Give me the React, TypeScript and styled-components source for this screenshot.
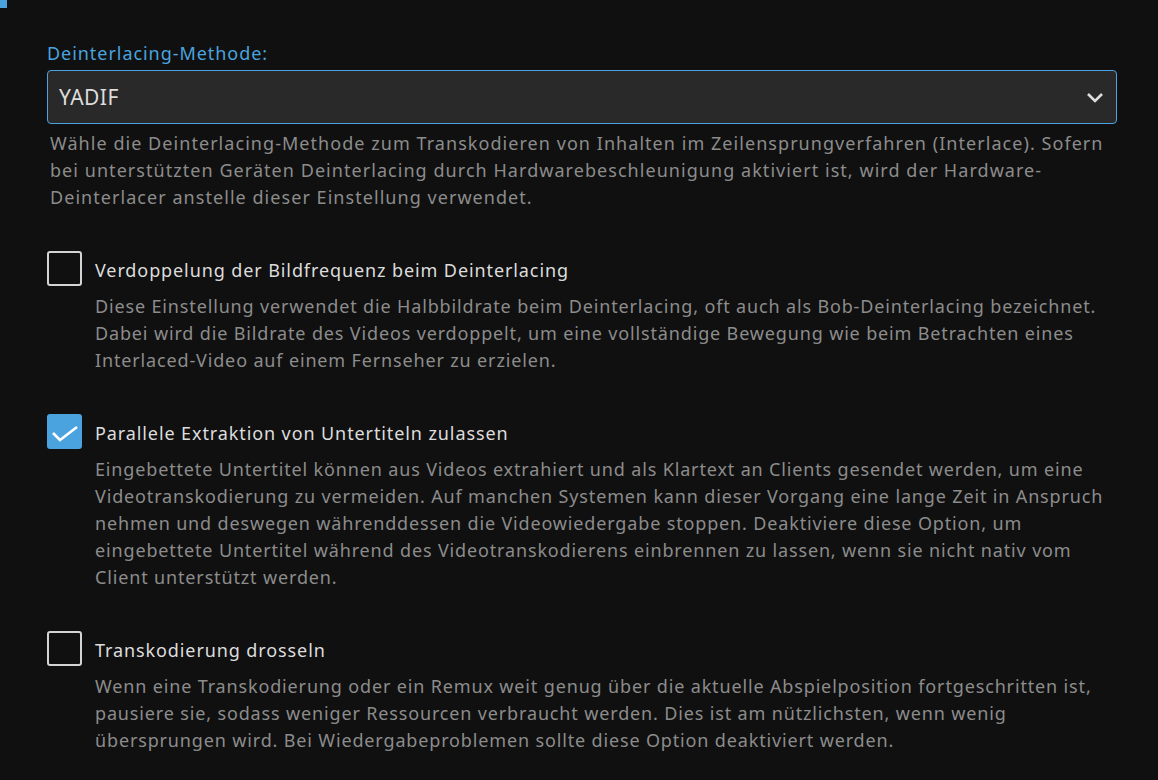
import React from "react";
import styled, { createGlobalStyle } from "styled-components";

const Global = createGlobalStyle`
  html, body { margin: 0; padding: 0; background: #101010; }
  body { font-family: "Noto Sans", "Open Sans", sans-serif; color: #dddddd; }
`;

const Page = styled.div`
  position: relative;
  width: 1158px;
  height: 780px;
  overflow: hidden;
  background: #101010;
  box-sizing: border-box;
  padding: 40px 41px 0 47px;
`;

const Marker = styled.div`
  position: absolute;
  left: 0;
  top: 0;
  width: 7px;
  height: 8px;
  background: #4aa3df;
`;

const SelectField = styled.div`
  display: flex;
  flex-direction: column;
`;

const Label = styled.label`
  font-size: 18px;
  letter-spacing: 0.95px;
  line-height: 27px;
  color: #4aa3df;
  margin-bottom: 3px;
`;

const SelectBox = styled.div`
  display: flex;
  align-items: center;
  justify-content: space-between;
  height: 54px;
  box-sizing: border-box;
  border: 1px solid #4aa3df;
  border-radius: 4px;
  background: #292929;
  padding: 0 12px 0 11px;
  font-size: 21px;
  letter-spacing: 0.5px;
  color: #dddddd;
`;

const Description = styled.div<{ $indent?: number; $mt?: number; $spacing?: number }>`
  font-size: 18px;
  letter-spacing: ${(p) => p.$spacing ?? 0.85}px;
  line-height: 27px;
  color: #8c8c8c;
  padding-left: ${(p) => p.$indent ?? 3}px;
  margin-top: ${(p) => p.$mt ?? 0}px;
`;

const CheckHead = styled.div`
  display: flex;
  align-items: flex-start;
  gap: 13px;
`;

const Box = styled.div<{ $checked?: boolean }>`
  flex: none;
  width: 35px;
  height: 35px;
  box-sizing: border-box;
  border-radius: 3px;
  border: ${(p) => (p.$checked ? "none" : "2px solid #d4d4d4")};
  background: ${(p) => (p.$checked ? "#4aa3df" : "transparent")};
  display: flex;
  align-items: center;
  justify-content: center;
`;

const Title = styled.span`
  font-size: 18px;
  letter-spacing: 0.9px;
  line-height: 27px;
  color: #dddddd;
  margin-top: 6px;
`;

const Stack = styled.div`
  display: flex;
  flex-direction: column;
`;

const Item = styled.div`
  display: flex;
  flex-direction: column;
  margin-top: 40px;
`;

const Chevron = () => (
  <svg width="18" height="12" viewBox="0 0 18 12">
    <path d="M2 3 L9 10 L16 3" fill="none" stroke="#dddddd" strokeWidth="2.6" />
  </svg>
);

const Check = () => (
  <svg width="35" height="35" viewBox="0 0 35 35">
    <path d="M6 19 L13 26 L30 13" fill="none" stroke="#ffffff" strokeWidth="2.6" />
  </svg>
);

const items = [
  {
    checked: false,
    title: "Verdoppelung der Bildfrequenz beim Deinterlacing",
    desc: "Diese Einstellung verwendet die Halbbildrate beim Deinterlacing, oft auch als Bob-Deinterlacing bezeichnet. Dabei wird die Bildrate des Videos verdoppelt, um eine vollständige Bewegung wie beim Betrachten eines Interlaced-Video auf einem Fernseher zu erzielen.",
  },
  {
    checked: true,
    title: "Parallele Extraktion von Untertiteln zulassen",
    desc: "Eingebettete Untertitel können aus Videos extrahiert und als Klartext an Clients gesendet werden, um eine Videotranskodierung zu vermeiden. Auf manchen Systemen kann dieser Vorgang eine lange Zeit in Anspruch nehmen und deswegen währenddessen die Videowiedergabe stoppen. Deaktiviere diese Option, um eingebettete Untertitel während des Videotranskodierens einbrennen zu lassen, wenn sie nicht nativ vom Client unterstützt werden.",
  },
  {
    checked: false,
    title: "Transkodierung drosseln",
    desc: "Wenn eine Transkodierung oder ein Remux weit genug über die aktuelle Abspielposition fortgeschritten ist, pausiere sie, sodass weniger Ressourcen verbraucht werden. Dies ist am nützlichsten, wenn wenig übersprungen wird. Bei Wiedergabeproblemen sollte diese Option deaktiviert werden.",
  },
];

export default function App() {
  return (
    <>
      <Global />
      <Page>
        <Marker />
        <Stack>
          <SelectField>
            <Label>Deinterlacing-Methode:</Label>
            <SelectBox>
              <span>YADIF</span>
              <Chevron />
            </SelectBox>
            <Description $mt={6} $spacing={1.05}>
              Wähle die Deinterlacing-Methode zum Transkodieren von Inhalten im Zeilensprungverfahren (Interlace). Sofern bei unterstützten Geräten Deinterlacing durch Hardwarebeschleunigung aktiviert ist, wird der Hardware-Deinterlacer anstelle dieser Einstellung verwendet.
            </Description>
          </SelectField>
          {items.map((it) => (
            <Item key={it.title}>
              <CheckHead>
                <Box $checked={it.checked}>{it.checked && <Check />}</Box>
                <Title>{it.title}</Title>
              </CheckHead>
              <Description $indent={48} $mt={7}>
                {it.desc}
              </Description>
            </Item>
          ))}
        </Stack>
      </Page>
    </>
  );
}
